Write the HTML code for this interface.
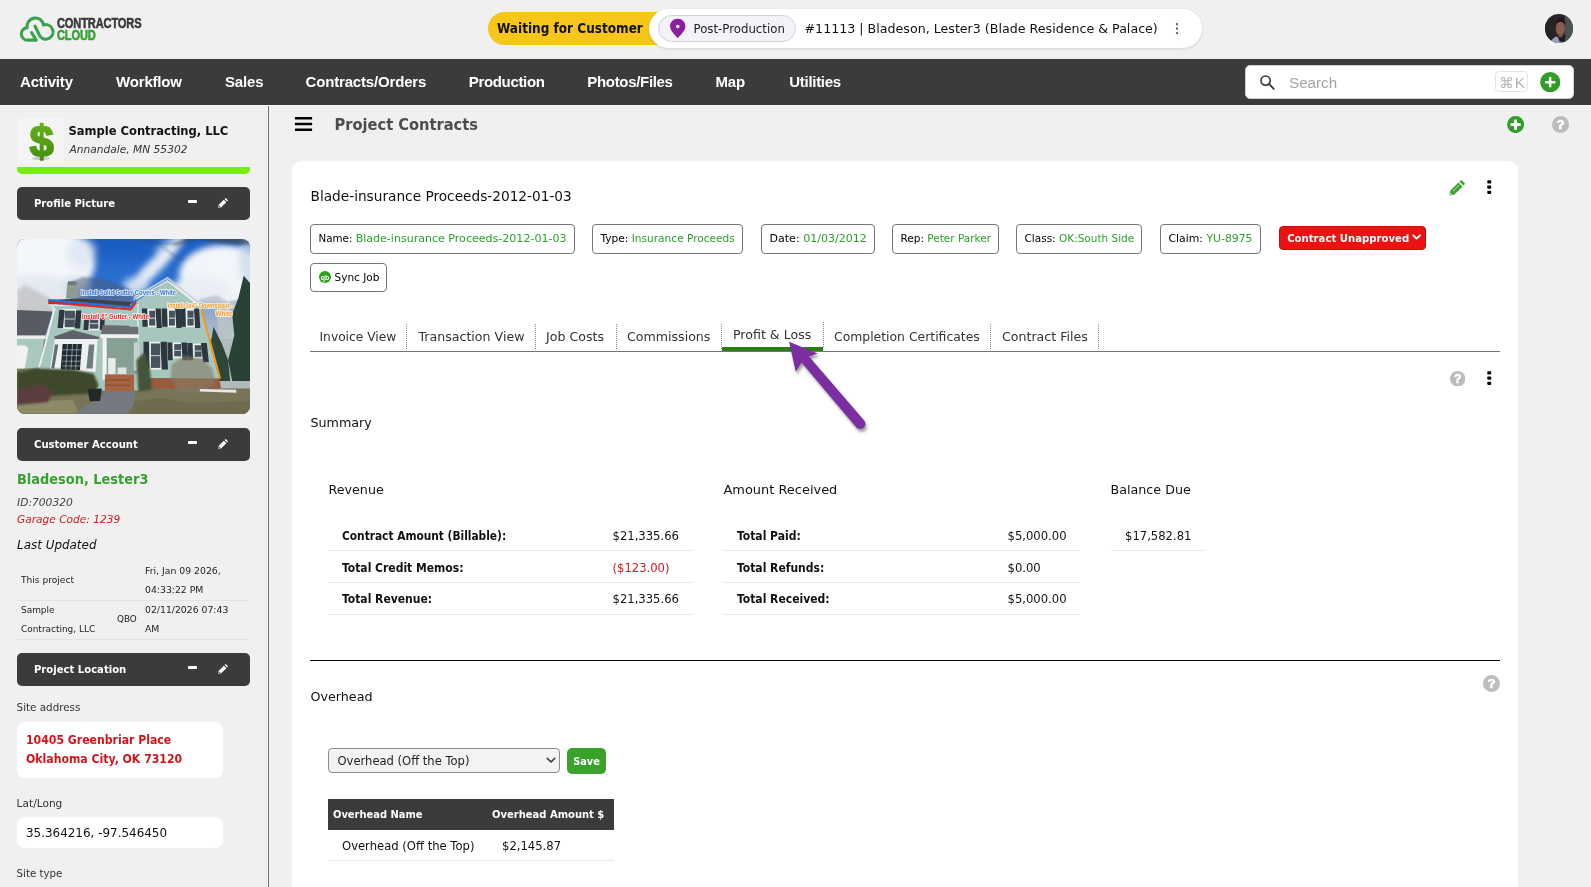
<!DOCTYPE html>
<html lang="en">
<head>
<meta charset="utf-8">
<title>Project Contracts</title>
<style>
*{box-sizing:border-box;margin:0;padding:0}
html,body{width:1591px;height:887px;overflow:hidden;background:#f0f0f0}
body{font-family:"DejaVu Sans","Liberation Sans",sans-serif;font-size:11.6px;color:#000;position:relative}
#wrap{position:absolute;left:0;top:0;width:1591px;height:887px;will-change:transform;overflow:hidden}
.abs{position:absolute}
.t{position:absolute;white-space:nowrap;line-height:16px}
.b{font-family:"DejaVu Sans Condensed","DejaVu Sans",sans-serif;font-weight:bold}
.g{color:#2e9e2b}
/* top header */
#top{position:absolute;left:0;top:0;width:1591px;height:59px;background:#f0f0f0}
#nav{position:absolute;left:0;top:59px;width:1591px;height:45.5px;background:#3c3a3d}
#nav span{position:absolute;top:13.5px;font-family:"Liberation Sans",sans-serif;font-weight:bold;font-size:15px;letter-spacing:-.17px;color:#fff;white-space:nowrap;line-height:18px}
/* sidebar */
#side{position:absolute;left:0;top:104.5px;width:269px;height:783px;background:#f0f0f0;border-right:1px solid #757578}
.shead{position:absolute;left:17px;width:233px;height:33px;background:#3c3a3d;border-radius:5px;color:#fff;font-weight:bold;font-family:"DejaVu Sans Condensed","DejaVu Sans",sans-serif;font-size:11.2px;line-height:33px;padding-left:17px}
.shead i{position:absolute;left:171px;top:13.3px;width:9.2px;height:2.8px;background:#fff;border-radius:.8px}
.shead svg{position:absolute;left:201.2px;top:10.5px}
.wbox{position:absolute;left:17px;width:206px;background:#fff;border-radius:8px}
.lu{position:absolute;font-size:9.3px;line-height:19px;color:#222;white-space:nowrap}
/* main */
#card{position:absolute;left:292px;top:161px;width:1226px;height:740px;background:#fff;border-radius:9px}
.chip{position:absolute;top:224px;height:30px;border:1px solid #767676;border-radius:4px;background:#fff;font-size:10.7px;line-height:27px;padding-left:7.5px;white-space:nowrap}
.tab{position:absolute;top:328.8px;font-size:12.6px;color:#333;white-space:nowrap;line-height:16px}
.dot{position:absolute;top:324px;height:25px;width:0;border-left:1px dotted #8a8a8a}
.row{position:absolute;height:1px;background:#e5e5ec}
.lbl{position:absolute;white-space:nowrap;line-height:16px;font-family:"DejaVu Sans Condensed","DejaVu Sans",sans-serif;font-weight:bold;font-size:12.0px;color:#111}
.val{position:absolute;white-space:nowrap;line-height:16px;font-size:11.6px;color:#111}
.h3{position:absolute;white-space:nowrap;line-height:16px;font-size:12.7px;color:#111}
</style>
</head>
<body>
<div id="wrap">
<!--TOP-->
<div id="top">
<!-- logo -->
<svg class="abs" style="left:14px;top:8px" width="50" height="42" viewBox="0 0 50 42"><path d="M17.6 24.6 L22.2 32.1 H13.96 A6.26 6.26 0 0 1 13.2 19.6 A8 8 0 0 1 29.6 17 A7.25 7.25 0 1 1 26.2 28.6 L21.07 18.2" fill="none" stroke="#38a34c" stroke-width="3.1" stroke-linejoin="round" stroke-linecap="round"/></svg>
<div class="t" id="lg1" style="left:57.2px;top:14.7px;font-family:'Liberation Sans',sans-serif;font-weight:bold;font-size:14.6px;line-height:16px;color:#39383b;-webkit-text-stroke:.55px #39383b;transform:scaleX(.76);transform-origin:0 0;letter-spacing:-.2px">CONTRACTORS</div>
<div class="t" id="lg2" style="left:57.2px;top:27.3px;font-family:'Liberation Sans',sans-serif;font-weight:bold;font-size:14.6px;line-height:16px;color:#33a22f;-webkit-text-stroke:.55px #33a22f;transform:scaleX(.76);transform-origin:0 0;letter-spacing:-.2px">CLOUD</div>
<!-- status pills -->
<div class="abs" style="left:488px;top:12px;width:200px;height:33px;background:#f6c61a;border-radius:16.5px"></div>
<div class="t b" id="wfc" style="left:497px;top:21px;font-size:13.45px;color:#111">Waiting for Customer</div>
<div class="abs" style="left:648.8px;top:9px;width:553.2px;height:39px;background:#fff;border-radius:19.5px;box-shadow:0 1px 3px rgba(0,0,0,.12)"></div>
<div class="abs" style="left:658px;top:15px;width:138px;height:27px;background:#f3f3f7;border:1px solid #d2d2da;border-radius:13.5px"></div>
<svg class="abs" style="left:668.5px;top:18px" width="17.5" height="20.8" viewBox="0 0 16 19"><path d="M8 0.6 C3.9 0.6 1 3.6 1 7.4 C1 11.8 5.2 15.4 8 18.4 C10.8 15.4 15 11.8 15 7.4 C15 3.6 12.1 0.6 8 0.6 Z" fill="#8b1fa0"/><circle cx="8" cy="7.8" r="1.6" fill="#fff"/></svg>
<div class="t" id="pp" style="left:693.5px;top:21px;font-size:11.75px;color:#222">Post-Production</div>
<div class="t" id="ttl" style="left:804.5px;top:20.5px;font-size:12.65px;color:#111">#11113 | Bladeson, Lester3 (Blade Residence &amp; Palace)</div>
<svg class="abs" style="left:1174px;top:22px" width="6" height="14" viewBox="0 0 6 14"><circle cx="3" cy="2.2" r="1.1" fill="#555"/><circle cx="3" cy="6.7" r="1.1" fill="#555"/><circle cx="3" cy="11.2" r="1.1" fill="#555"/></svg>
<!-- avatar -->
<svg class="abs" style="left:1544px;top:13px" width="30" height="31" viewBox="0 0 30 31"><defs><clipPath id="av"><ellipse cx="15" cy="15.45" rx="14" ry="14.45"/></clipPath><filter id="avb" x="-20%" y="-20%" width="140%" height="140%"><feGaussianBlur stdDeviation=".7"/></filter></defs><g clip-path="url(#av)"><rect width="30" height="31" fill="#2b272b"/><g filter="url(#avb)"><rect x="21" y="0" width="9" height="31" fill="#4a5451"/><rect x="0" y="0" width="11" height="31" fill="#262226"/><ellipse cx="16.4" cy="15.6" rx="4.6" ry="7.2" fill="#8a5a54"/><path d="M11.6 11 Q11.8 4.6 16.6 4.4 Q21.4 4.6 21.4 11.4 Q19 8.8 16.4 9 Q13.4 8.8 11.6 11Z" fill="#23191c"/><path d="M6 31 Q8 23.6 14 23.4 L19 29 L21 31Z" fill="#98a2b6"/><path d="M13.4 23 L21.6 22.6 L20.4 28.4 L15.6 28.8Z" fill="#1c1a1e"/><path d="M14.4 21.4 L18.8 21.4 L18.2 24.2 L15.2 24.2Z" fill="#7e4f49"/></g></g></svg>
</div>
<!--NAV-->
<div id="nav">
<span style="left:20px">Activity</span>
<span style="left:116px">Workflow</span>
<span style="left:225px">Sales</span>
<span style="left:305.5px">Contracts/Orders</span>
<span style="left:468.8px;letter-spacing:-.34px">Production</span>
<span style="left:587.3px;letter-spacing:-.32px">Photos/Files</span>
<span style="left:715.5px">Map</span>
<span style="left:789.3px;letter-spacing:-.3px">Utilities</span>
<!-- search -->
<div class="abs" style="left:1245px;top:6px;width:329px;height:34px;background:#fff;border:1px solid #cfcfcf;border-radius:5px"></div>
<svg class="abs" style="left:1259px;top:14.5px" width="17" height="17" viewBox="0 0 17 17"><circle cx="6.6" cy="6.6" r="4.6" fill="none" stroke="#333" stroke-width="1.6"/><path d="M10 10 L14.8 14.8" stroke="#333" stroke-width="1.7" stroke-linecap="round"/></svg>
<div class="t" style="left:1289px;top:14.5px;font-family:'Liberation Sans',sans-serif;font-size:15.2px;line-height:18px;color:#a3a3a3">Search</div>
<div class="abs" style="left:1495px;top:12px;width:32.5px;height:20.5px;border:1px solid #e4e4e4;border-radius:4px;background:#fff"></div>
<div class="t" style="left:1499.3px;top:14.6px;font-family:'DejaVu Sans','Liberation Sans',sans-serif;font-size:13px;line-height:18px;color:#b3b3b3;letter-spacing:.3px"><span style="position:static;font:inherit;font-family:'DejaVu Sans',sans-serif;font-weight:normal;color:#b3b3b3;font-size:14.6px;letter-spacing:0;margin-right:.8px">&#8984;</span><span style="position:static;font-family:'Liberation Sans',sans-serif;font-weight:normal;font-size:15.3px;color:#b3b3b3;letter-spacing:0">K</span></div>
<svg class="abs" style="left:1539.7px;top:12.6px" width="20.4" height="20.4" viewBox="0 0 21 21"><circle cx="10.5" cy="10.5" r="10.4" fill="#2f9e27"/><path d="M10.5 6.2 V14.8 M6.2 10.5 H14.8" stroke="#fff" stroke-width="2.5" stroke-linecap="round"/></svg>
</div>
<!--SIDE-->
<div id="side">

<!-- company -->
<div class="abs" id="dollar" style="left:18px;top:13.5px;width:46px;height:46px;background:#f4f4f4">
<svg width="46" height="46" viewBox="0 0 46 46"><defs><linearGradient id="dg" x1="0" y1="0" x2="0" y2="1"><stop offset="0" stop-color="#6cb51c"/><stop offset="1" stop-color="#3d8a0c"/></linearGradient></defs><ellipse cx="23" cy="40.5" rx="9" ry="1.6" fill="#9a9a9a" opacity=".45"/><text x="23.6" y="38.6" text-anchor="middle" font-family="Liberation Sans, sans-serif" font-weight="bold" font-size="43.5" fill="url(#dg)" stroke="url(#dg)" stroke-width="1.7" stroke-linejoin="round">$</text></svg>
</div>
<div class="t b" style="left:68.5px;top:18.3px;font-size:12.8px;color:#111">Sample Contracting, LLC</div>
<div class="t" style="left:69.5px;top:37.2px;font-size:10.65px;font-style:italic;color:#333">Annandale, MN 55302</div>
<div class="abs" style="left:17px;top:62px;width:233px;height:7.5px;background:#77ee0a;border-radius:0 0 5px 5px"></div>
<!--PHOTO_START--><svg class="abs" id="photo" style="left:17px;top:134.5px;border-radius:8px" width="233" height="174.5" viewBox="0 0 233 174.5">
<defs><linearGradient id="sky" x1="0" y1="0" x2="0" y2="1"><stop offset="0" stop-color="#1a5cc2"/><stop offset=".45" stop-color="#2f74d2"/><stop offset=".75" stop-color="#8fb4e4"/><stop offset="1" stop-color="#c9dcf0"/></linearGradient><filter id="b3" x="-20%" y="-20%" width="140%" height="140%"><feGaussianBlur stdDeviation="3"/></filter><filter id="b1" x="-20%" y="-20%" width="140%" height="140%"><feGaussianBlur stdDeviation="1"/></filter><filter id="b05" x="-20%" y="-20%" width="140%" height="140%"><feGaussianBlur stdDeviation=".5"/></filter><filter id="glow" x="-10%" y="-40%" width="120%" height="180%"><feGaussianBlur stdDeviation=".7"/></filter></defs>
<rect width="233" height="110" fill="url(#sky)"/>
<rect y="100" width="233" height="75" fill="#777458"/>
<g filter="url(#b3)">
<ellipse cx="28" cy="24" rx="50" ry="36" fill="#f3f6fa" opacity="1"/>
<ellipse cx="18" cy="56" rx="44" ry="20" fill="#e4eaf1" opacity="1"/>
<ellipse cx="64" cy="14" rx="14" ry="16" fill="#dbe5f2" opacity="0.75"/>
<ellipse cx="60" cy="48" rx="14" ry="12" fill="#cfdcec" opacity="0.7"/>
<ellipse cx="141" cy="24" rx="38" ry="7" fill="#edf2f9" opacity="0.95" transform="rotate(-47 141 24)"/>
<ellipse cx="127" cy="36" rx="24" ry="5.5" fill="#e3ebf6" opacity="0.9" transform="rotate(-50 127 36)"/>
<ellipse cx="119" cy="46" rx="13" ry="8" fill="#d3e0f1" opacity="0.8"/>
<ellipse cx="150" cy="6" rx="14" ry="5" fill="#c7d8ef" opacity="0.6" transform="rotate(-30 150 6)"/>
<ellipse cx="206" cy="36" rx="44" ry="30" fill="#f2f5f9" opacity="1"/>
<ellipse cx="182" cy="52" rx="30" ry="14" fill="#e9eef5" opacity="1"/>
<ellipse cx="232" cy="20" rx="10" ry="26" fill="#c9d7ea" opacity="0.7"/>
<ellipse cx="100" cy="8" rx="22" ry="10" fill="#1a5cc0" opacity="0.5"/>
</g>
<g filter="url(#b1)"><ellipse cx="212" cy="2" rx="26" ry="3.5" fill="#3c4250" opacity="0.55" transform="rotate(4 212 2)"/><ellipse cx="165" cy="3" rx="10" ry="2" fill="#3c4250" opacity="0.35" transform="rotate(-20 165 3)"/></g>
<g filter="url(#b1)">
<polygon points="0,52 8,46 20,52 34,60 36,76 0,76" fill="#a09c9a" opacity=".4" filter="url(#b1)"/>
<polygon points="52,44 66,38 86,40 104,46 116,52 116,64 52,62" fill="#4a5670" opacity=".5"/>
<polygon points="182,60 200,56 212,64 212,96 200,102 190,98" fill="#aab0b6" opacity=".55"/>
<path d="M119.3 1.2 Q154.7 8.5 181.9 0.2 M181.9 0.2 Q206.9 -1.9 233.0 3.3 M138.0 0.2 Q150.6 14.8 167.3 21.0" stroke="#3a3f4c" stroke-width=".7" fill="none" opacity=".8"/>
</g>
<polygon points="200.6,64.9 233.0,58.6 233.0,151.5 200.6,151.5" fill="#b9c2c8" opacity=".9"/>
<g filter="url(#b05)">
<polygon points="226.7,36.7 233.0,44.0 233.0,142.1 215.2,142.1 211.1,121.2 217.3,96.2 215.2,75.3 221.5,58.6" fill="#2b4336" />
<polygon points="196.5,87.8 204.8,104.5 211.1,121.2 213.2,142.1 190.2,142.1 192.3,112.9" fill="#2f4738" />
</g>
<rect x="-0.1" y="149.4" width="126.6" height="26.1" fill="#777458" />
<rect x="113.0" y="149.4" width="121.0" height="26.1" fill="#777458" />
<polygon points="113.0,162.9 144.3,158.8 175.6,164.0 233.0,161.9 233.0,175.5 113.0,175.5" fill="#6f6b4e" />
<polygon points="-0.1,162.9 55.6,160.8 61.9,174.4 -0.1,174.4" fill="#8d8a68" />
<path d="M89.3 151.8 L117.1 151.8 Q120.5 161 114.2 170 L108.3 175 L55.6 175 L82 159.8 Z" fill="#747a7f"/>
<polygon points="-0.1,71.1 35.8,72.4 28.5,96.6 -0.1,96.6" fill="#585b61" />
<rect x="-0.1" y="96.6" width="28.6" height="3.3" fill="#e9eeec" />
<polygon points="-0.1,99.9 27.4,99.9 22.2,129.5 -0.1,129.5" fill="#a9c8bf" />
<polygon points="-0.1,106.6 8.7,106.6 11.4,109.7 7.6,129.5 -0.1,129.5" fill="#f2f2f0" />
<polygon points="37.2,66.9 118.2,68.0 123.0,68.0 123.0,151.5 24.3,151.5 22.2,131.6" fill="#a7c7be" />
<polygon points="31.6,61.1 61.9,59.6 118.2,63.2 118.2,68.0 31.6,64.9" fill="#3f4249" />
<polygon points="50.4,44.0 59.4,43.0 61.4,58.6 48.9,59.6" fill="#8e9b93" />
<rect x="51.0" y="42.3" width="8.4" height="3.8" fill="#6e7a76" />
<line x1="37.7" y1="69.0" x2="22.2" y2="128.5" stroke="#eef2f0" stroke-width="1.8" />
<rect x="46.2" y="70.1" width="13.2" height="19.8" fill="#f1f3f2" /><rect x="47.7" y="71.7" width="10.2" height="16.5" fill="#46525c" /><rect x="47.7" y="79.6" width="10.2" height="0.8" fill="#f1f3f2" />
<polygon points="42.2,71.1 47.7,71.1 46.0,88.9 40.6,88.9" fill="#2e3640" />
<polygon points="58.9,71.5 64.4,71.5 63.1,89.5 57.7,89.5" fill="#2e3640" />
<rect x="71.3" y="78.0" width="11.4" height="13.4" fill="#f1f3f2" /><rect x="72.7" y="79.7" width="8.6" height="10.0" fill="#46525c" /><rect x="72.7" y="84.3" width="8.6" height="0.8" fill="#f1f3f2" />
<polygon points="67.3,79.5 72.1,79.5 71.3,90.9 66.5,90.9" fill="#2e3640" />
<polygon points="83.1,79.5 87.7,79.5 87.3,90.9 82.7,90.9" fill="#2e3640" />
<polygon points="85.9,86.1 118.2,87.0 120.7,95.7 83.8,95.3" fill="#6b6d72" />
<rect x="83.4" y="95.3" width="38.6" height="3.8" fill="#eef1f0" />
<rect x="89.4" y="99.1" width="32.6" height="35.7" fill="#86a094" />
<rect x="116.1" y="102.4" width="4.6" height="29.2" fill="#6b8278" />
<rect x="85.6" y="99.1" width="4.0" height="41.9" fill="#f3f5f4" />
<rect x="91.1" y="119.1" width="7.5" height="16.3" fill="#e8eceb" />
<rect x="100.5" y="128.5" width="8.9" height="6.9" fill="#dfe4e2" />
<polygon points="37.2,97.4 55.6,90.9 83.1,98.2 80.6,100.3 37.9,99.9" fill="#5f6268" />
<polygon points="37.9,99.9 80.6,99.9 78.6,132.7 32.6,131.6" fill="#eef1f0" />
<polygon points="45.6,104.9 65.0,104.9 62.9,131.2 43.7,130.6" fill="#1f2a33" />
<polygon points="71.9,105.6 77.3,105.6 75.6,129.5 69.4,129.5" fill="#6d7d80" />
<polygon points="37.9,105.6 41.4,105.6 37.2,129.5 34.3,129.5" fill="#5f6f73" />
<line x1="50.4" y1="104.9" x2="48.7" y2="131.0" stroke="#dfe6e6" stroke-width="0.5" />
<line x1="55.6" y1="104.9" x2="53.9" y2="131.0" stroke="#dfe6e6" stroke-width="0.5" />
<line x1="60.2" y1="104.9" x2="58.5" y2="131.0" stroke="#dfe6e6" stroke-width="0.5" />
<line x1="45.2" y1="110.8" x2="64.6" y2="110.8" stroke="#dfe6e6" stroke-width="0.5" />
<line x1="45.2" y1="116.6" x2="64.6" y2="116.6" stroke="#dfe6e6" stroke-width="0.5" />
<line x1="45.2" y1="122.2" x2="64.6" y2="122.2" stroke="#dfe6e6" stroke-width="0.5" />
<line x1="45.2" y1="127.0" x2="64.6" y2="127.0" stroke="#dfe6e6" stroke-width="0.5" />
<rect x="87.9" y="135.4" width="28.6" height="16.7" fill="#a86442" />
<line x1="87.9" y1="141.0" x2="116.5" y2="141.0" stroke="#7c4429" stroke-width="0.8" />
<line x1="87.9" y1="146.2" x2="116.5" y2="146.2" stroke="#7c4429" stroke-width="0.8" />
<polygon points="113.0,64.9 119.3,62.4 150.6,42.3 183.5,68.0 202.3,140.0 113.0,140.0" fill="#a7c7be" />
<polyline points="116.8,61.1 150.6,41.9 183.5,67.6" fill="none" stroke="#e9eeec" stroke-width="1.6"/>
<polygon points="117.2,59.6 150.6,40.2 183.9,66.5 185.0,64.9 150.6,37.7 116.1,58.2" fill="#c9d2d4" opacity=".9"/>
<line x1="120.9" y1="64.9" x2="120.9" y2="140.0" stroke="#e9eeec" stroke-width="1.2" />
<rect x="113.0" y="87.8" width="8.3" height="8.4" fill="#6b6d72" />
<rect x="113.0" y="95.3" width="8.8" height="3.8" fill="#eef1f0" />
<rect x="113.0" y="99.1" width="7.5" height="35.7" fill="#86a094" />
<rect x="116.8" y="103.5" width="3.7" height="28.1" fill="#c8d4d0" />
<polygon points="132.8,138.9 202.3,139.6 204.0,149.4 132.8,149.4" fill="#9a5b3c" />
<rect x="113.0" y="135.4" width="4.2" height="16.7" fill="#a86442" />
<rect x="130.7" y="70.1" width="9.0" height="18.1" fill="#f1f3f2" /><rect x="132.2" y="71.7" width="6.0" height="14.9" fill="#46525c" /><rect x="132.2" y="78.7" width="6.0" height="0.9" fill="#f1f3f2" />
<polygon points="124.9,69.5 130.1,69.5 130.7,87.8 125.5,87.8" fill="#2e3640" />
<polygon points="138.5,69.5 143.7,69.5 144.9,88.9 139.7,88.9" fill="#2e3640" />
<rect x="150.6" y="70.1" width="8.7" height="18.1" fill="#f1f3f2" /><rect x="152.0" y="71.7" width="5.9" height="14.9" fill="#46525c" /><rect x="152.0" y="78.7" width="5.9" height="0.9" fill="#f1f3f2" />
<polygon points="144.7,69.5 149.9,69.5 150.6,87.8 145.3,87.8" fill="#2e3640" />
<polygon points="158.1,69.5 163.3,69.5 164.5,88.9 159.3,88.9" fill="#2e3640" />
<rect x="168.9" y="70.1" width="9.2" height="18.1" fill="#f1f3f2" /><rect x="170.4" y="71.7" width="6.2" height="14.9" fill="#46525c" /><rect x="170.4" y="78.7" width="6.2" height="0.9" fill="#f1f3f2" />
<polygon points="163.1,69.5 168.3,69.5 168.9,87.8 163.7,87.8" fill="#2e3640" />
<polygon points="176.9,69.5 182.1,69.5 183.3,88.9 178.1,88.9" fill="#2e3640" />
<rect x="132.4" y="102.8" width="12.3" height="27.8" fill="#f1f3f2" /><rect x="133.9" y="104.5" width="9.4" height="24.4" fill="#46525c" /><rect x="133.9" y="116.3" width="9.4" height="0.8" fill="#f1f3f2" />
<polygon points="126.4,102.8 132.0,102.8 132.4,129.5 126.8,129.5" fill="#2e3640" />
<polygon points="143.5,102.8 149.7,102.8 151.0,130.6 144.7,130.6" fill="#2e3640" />
<rect x="155.8" y="103.5" width="9.8" height="15.6" fill="#f1f3f2" /><rect x="157.2" y="105.1" width="6.9" height="12.3" fill="#46525c" /><rect x="157.2" y="110.9" width="6.9" height="0.8" fill="#f1f3f2" />
<polygon points="150.4,103.5 155.2,103.5 155.8,121.2 151.0,121.2" fill="#2e3640" />
<polygon points="164.3,103.5 170.2,103.5 171.4,121.2 165.6,121.2" fill="#2e3640" />
<rect x="176.2" y="104.5" width="9.8" height="15.0" fill="#f1f3f2" /><rect x="177.7" y="106.2" width="6.9" height="11.7" fill="#46525c" /><rect x="177.7" y="111.6" width="6.9" height="0.8" fill="#f1f3f2" />
<polygon points="170.6,104.1 175.4,104.1 176.2,121.2 171.4,121.2" fill="#2e3640" />
<polygon points="183.9,104.1 189.8,104.1 191.9,123.3 186.0,123.3" fill="#2e3640" />
<g filter="url(#b1)">
<polygon points="-0.1,133.7 18.0,129.5 55.6,130.6 76.5,134.8 81.7,146.2 76.5,154.6 34.7,156.7 -0.1,162.9" fill="#3d4a2c" />
<polygon points="-0.1,150.4 24.3,145.2 36.8,152.5 30.6,162.9 -0.1,166.1" fill="#5c3d3c" />
<polygon points="154.7,125.4 167.3,117.0 183.9,119.1 195.4,129.5 198.6,146.2 181.9,154.6 161.0,152.5 153.7,140.0" fill="#857a66" opacity=".62"/>
<polygon points="119.3,121.2 127.6,112.9 132.8,129.5 134.9,150.4 121.3,152.5" fill="#44523a" />
</g>
<polygon points="70.6,150.0 84.8,149.4 83.1,161.9 72.7,162.3" fill="#25272b" />
<polygon points="182.9,150.0 219.0,150.8 219.4,153.8 182.9,152.5" fill="#e6e9ea" />
<polyline points="31.2,61.1 113.0,68.4 119.2,60.7" fill="none" stroke="#2f6fd6" stroke-width="2.2"/>
<polyline points="31.2,63.2 113.6,70.5 119.2,63.2" fill="none" stroke="#e8281f" stroke-width="2"/>
<line x1="184.4" y1="71.1" x2="203.1" y2="139.6" stroke="#f3981c" stroke-width="2" />
<text x="64" y="55.6" textLength="95" lengthAdjust="spacingAndGlyphs" font-family="Liberation Sans, sans-serif" font-weight="bold" font-size="6.4" fill="none" stroke="#fff" stroke-width="1.6" stroke-linejoin="round" opacity=".9" filter="url(#glow)">Install Solid Gutter Covers - White</text><text x="64" y="55.6" textLength="95" lengthAdjust="spacingAndGlyphs" font-family="Liberation Sans, sans-serif" font-weight="bold" font-size="6.4" fill="#2f6fd6">Install Solid Gutter Covers - White</text>
<text x="65" y="79.8" textLength="67" lengthAdjust="spacingAndGlyphs" font-family="Liberation Sans, sans-serif" font-weight="bold" font-size="6.4" fill="none" stroke="#fff" stroke-width="1.6" stroke-linejoin="round" opacity=".9" filter="url(#glow)">Install 6&quot; Gutter - White</text><text x="65" y="79.8" textLength="67" lengthAdjust="spacingAndGlyphs" font-family="Liberation Sans, sans-serif" font-weight="bold" font-size="6.4" fill="#e8281f">Install 6&quot; Gutter - White</text>
<text x="150.6" y="68.8" textLength="65.5" lengthAdjust="spacingAndGlyphs" font-family="Liberation Sans, sans-serif" font-weight="bold" font-size="6.4" fill="none" stroke="#fff" stroke-width="1.6" stroke-linejoin="round" opacity=".9" filter="url(#glow)">Install 3x4&quot; Downspout -</text><text x="150.6" y="68.8" textLength="65.5" lengthAdjust="spacingAndGlyphs" font-family="Liberation Sans, sans-serif" font-weight="bold" font-size="6.4" fill="#f3981c">Install 3x4&quot; Downspout -</text>
<text x="198.6" y="77.3" textLength="16.8" lengthAdjust="spacingAndGlyphs" font-family="Liberation Sans, sans-serif" font-weight="bold" font-size="6.4" fill="none" stroke="#fff" stroke-width="1.6" stroke-linejoin="round" opacity=".9" filter="url(#glow)">White</text><text x="198.6" y="77.3" textLength="16.8" lengthAdjust="spacingAndGlyphs" font-family="Liberation Sans, sans-serif" font-weight="bold" font-size="6.4" fill="#f3981c">White</text>
</svg><!--PHOTO_END-->
<!-- customer -->
<div class="t b g" style="left:17px;top:366.5px;font-size:14.4px;color:#35a12f">Bladeson, Lester3</div>
<div class="t" style="left:17px;top:390.3px;font-size:10.7px;font-style:italic;color:#444">ID:700320</div>
<div class="t" style="left:17px;top:406.5px;font-size:10.6px;font-style:italic;color:#d0181d">Garage Code: 1239</div>
<div class="t" style="left:17px;top:432px;font-size:11.95px;font-style:italic;color:#111">Last Updated</div>
<div class="lu" style="left:21px;top:466px;font-size:9.1px">This project</div>
<div class="lu" style="left:145px;top:456.5px">Fri, Jan 09 2026,<br>04:33:22 PM</div>
<div class="abs" style="left:17px;top:495.5px;width:233px;height:1px;background:#e2e2ea"></div>
<div class="lu" style="left:21px;top:496.3px;font-size:8.95px">Sample<br>Contracting, LLC</div>
<div class="lu" style="left:117px;top:505.3px;font-size:8.8px">QBO</div>
<div class="lu" style="left:145px;top:495.5px">02/11/2026 07:43<br>AM</div>
<div class="abs" style="left:17px;top:534.5px;width:233px;height:1px;background:#e2e2ea"></div>
<!-- location -->
<div class="t" style="left:16.6px;top:594.5px;font-size:10.35px;color:#333">Site address</div>
<div class="wbox" style="top:617.5px;height:56.3px"></div>
<div class="t b" style="left:26px;top:626.5px;font-size:12.15px;line-height:19px;color:#d3151b">10405 Greenbriar Place<br>Oklahoma City, OK 73120</div>
<div class="t" style="left:16.6px;top:690.5px;font-size:10.6px;color:#333">Lat/Long</div>
<div class="wbox" style="top:712.5px;height:30.7px"></div>
<div class="t" style="left:26px;top:720px;font-size:11.95px;color:#111">35.364216, -97.546450</div>
<div class="t" style="left:16.6px;top:760.5px;font-size:10.25px;color:#333">Site type</div>
<div class="shead" style="top:82.5px">Profile Picture<i></i><svg width="10" height="10" viewBox="0 0 16 16"><path d="M1.2 10.8 L9.3 2.7 L13.3 6.7 L5.2 14.8 L0.4 15.6 Z" fill="#fff"/><path d="M10.5 1.5 L11.5 0.5 Q12.2 -0.1 12.9 0.5 L15.5 3.1 Q16.1 3.8 15.5 4.5 L14.5 5.5 Z" fill="#fff"/><circle cx="2.6" cy="13.4" r="1" fill="#3c3a3d"/></svg></div>
<div class="shead" style="top:323.5px">Customer Account<i></i><svg width="10" height="10" viewBox="0 0 16 16"><path d="M1.2 10.8 L9.3 2.7 L13.3 6.7 L5.2 14.8 L0.4 15.6 Z" fill="#fff"/><path d="M10.5 1.5 L11.5 0.5 Q12.2 -0.1 12.9 0.5 L15.5 3.1 Q16.1 3.8 15.5 4.5 L14.5 5.5 Z" fill="#fff"/><circle cx="2.6" cy="13.4" r="1" fill="#3c3a3d"/></svg></div>
<div class="shead" style="top:548.5px">Project Location<i></i><svg width="10" height="10" viewBox="0 0 16 16"><path d="M1.2 10.8 L9.3 2.7 L13.3 6.7 L5.2 14.8 L0.4 15.6 Z" fill="#fff"/><path d="M10.5 1.5 L11.5 0.5 Q12.2 -0.1 12.9 0.5 L15.5 3.1 Q16.1 3.8 15.5 4.5 L14.5 5.5 Z" fill="#fff"/><circle cx="2.6" cy="13.4" r="1" fill="#3c3a3d"/></svg></div>
</div>
<div class="abs" style="left:0;top:104.6px;width:1591px;height:1.2px;background:#f9f9f9"></div>
<!--MAIN-->

<!-- page title row -->
<svg class="abs" style="left:294px;top:116px" width="19" height="16" viewBox="0 0 19 16"><rect x="0.9" y="1.1" width="17.2" height="2.5" rx=".5" fill="#050505"/><rect x="0.9" y="6.8" width="17.2" height="2.5" rx=".5" fill="#050505"/><rect x="0.9" y="12.5" width="17.2" height="2.5" rx=".5" fill="#050505"/></svg>
<div class="t b" id="pc" style="left:334.5px;top:114.7px;font-size:16.3px;line-height:20px;color:#4c4c4e">Project Contracts</div>
<svg class="abs" style="left:1507px;top:115.9px" width="17.2" height="17.2" viewBox="0 0 17 17"><circle cx="8.5" cy="8.5" r="8.4" fill="#2f9e27"/><path d="M8.5 4.7 V12.3 M4.7 8.5 H12.3" stroke="#fff" stroke-width="3" stroke-linecap="round"/></svg>
<svg class="abs" style="left:1552.1px;top:115.6px" width="17" height="17" viewBox="0 0 16 16"><circle cx="8" cy="8" r="8" fill="#bcbcbc"/><text x="8" y="12.6" text-anchor="middle" font-family="Liberation Sans, sans-serif" font-weight="bold" font-size="12.6" fill="#fff" stroke="#fff" stroke-width=".6">?</text></svg>
<div id="card"></div>
<div class="t" id="ct" style="left:310.5px;top:188px;font-size:13.7px;color:#111">Blade-insurance Proceeds-2012-01-03</div>
<svg class="abs" style="left:1449px;top:179.7px" width="16" height="16" viewBox="0 0 16 16"><path d="M1.2 10.8 L9.5 2.5 L13.5 6.5 L5.2 14.8 L0.4 15.6 Z" fill="#3aa22e"/><path d="M10.4 1.6 L11.5 0.5 Q12.2 -0.1 12.9 0.5 L15.5 3.1 Q16.1 3.8 15.5 4.5 L14.4 5.6 Z" fill="#3aa22e"/><path d="M3.9 11.3 L10.4 4.8" stroke="#e9f6e6" stroke-width=".8"/><path d="M1.5 12.8 L3.2 14.5 L1.3 14.8 Z" fill="#fff"/></svg>
<svg class="abs" style="left:1485.5px;top:179px" width="6" height="16" viewBox="0 0 6 16"><rect x="1.3" y="1.3" width="3.9" height="3.2" rx=".8" fill="#050505"/><rect x="1.3" y="6.5" width="3.9" height="3.2" rx=".8" fill="#050505"/><rect x="1.3" y="11.7" width="3.9" height="3.2" rx=".8" fill="#050505"/></svg>
<!-- chips -->
<div class="chip" style="left:310px;width:265px;font-size:10.3px">Name: <span class="g" style="font-size:11.05px">Blade-insurance Proceeds-2012-01-03</span></div>
<div class="chip" style="left:592px;width:151px;font-size:10.58px">Type: <span class="g">Insurance Proceeds</span></div>
<div class="chip" style="left:761px;width:114px;font-size:11.05px">Date: <span class="g">01/03/2012</span></div>
<div class="chip" style="left:892px;width:107px;font-size:10.5px">Rep: <span class="g">Peter Parker</span></div>
<div class="chip" style="left:1016px;width:126px;font-size:10.5px">Class: <span class="g">OK:South Side</span></div>
<div class="chip" style="left:1160px;width:101px;font-size:10.85px">Claim: <span class="g">YU-8975</span></div>
<div class="abs b" style="left:1279px;top:225.5px;width:147px;height:24px;background:#ee1111;border:1px solid #c40d0d;border-radius:4px;color:#fff;font-size:11.25px;line-height:23px;padding-left:7.2px;white-space:nowrap">Contract Unapproved<svg style="position:absolute;left:132px;top:7.8px" width="9.2" height="6.6" viewBox="0 0 10 7"><path d="M1.2 1.3 L5 5 L8.8 1.3" fill="none" stroke="#fff" stroke-width="2" stroke-linecap="round" stroke-linejoin="round"/></svg></div>
<div class="chip" style="left:310px;top:263px;width:77px;height:28.7px;padding-left:23.5px;font-size:10.5px;line-height:26px">Sync Job<svg style="position:absolute;left:8px;top:7.3px" width="12" height="12" viewBox="0 0 12 12"><circle cx="6" cy="6" r="6" fill="#2ca01c"/><text x="6" y="8.6" text-anchor="middle" font-family="Liberation Sans, sans-serif" font-weight="bold" font-size="7" fill="#fff">qb</text></svg></div>
<!-- tabs -->
<div class="tab" style="left:319.5px;font-size:12.25px">Invoice View</div>
<div class="tab" style="left:418.5px">Transaction View</div>
<div class="tab" style="left:546px">Job Costs</div>
<div class="tab" style="left:627px">Commissions</div>
<div class="tab" style="left:733px;top:326.8px">Profit &amp; Loss</div>
<div class="tab" style="left:834px;font-size:12.4px">Completion Certificates</div>
<div class="tab" style="left:1002px">Contract Files</div>
<div class="dot" style="left:406px"></div><div class="dot" style="left:535px"></div><div class="dot" style="left:616px"></div><div class="dot" style="left:721px;top:323.5px"></div><div class="dot" style="left:822.5px;top:322px"></div><div class="dot" style="left:989.8px"></div><div class="dot" style="left:1097.8px"></div>
<div class="abs" style="left:310px;top:351px;width:1190px;height:1px;background:#757575"></div>
<div class="abs" style="left:722px;top:347px;width:100.5px;height:4px;background:#2a7d12"></div>
<svg class="abs" style="left:1449.5px;top:370.9px" width="15.4" height="15.4" viewBox="0 0 16 16"><circle cx="8" cy="8" r="8" fill="#bcbcbc"/><text x="8" y="12.6" text-anchor="middle" font-family="Liberation Sans, sans-serif" font-weight="bold" font-size="12.6" fill="#fff" stroke="#fff" stroke-width=".6">?</text></svg>
<svg class="abs" style="left:1485.5px;top:370px" width="6" height="16" viewBox="0 0 6 16"><rect x="1.3" y="1.3" width="3.9" height="3.2" rx=".8" fill="#050505"/><rect x="1.3" y="6.5" width="3.9" height="3.2" rx=".8" fill="#050505"/><rect x="1.3" y="11.7" width="3.9" height="3.2" rx=".8" fill="#050505"/></svg>
<!-- summary -->
<div class="h3" style="left:310.5px;top:415.4px">Summary</div>
<div class="h3" style="left:328.5px;top:481.5px">Revenue</div>
<div class="h3" style="left:723.5px;top:481.5px;font-size:12.95px">Amount Received</div>
<div class="h3" style="left:1110.5px;top:481.5px">Balance Due</div>
<div class="lbl" style="left:342px;top:528px;font-size:11.8px">Contract Amount (Billable):</div><div class="val" style="left:612.5px;top:528px">$21,335.66</div>
<div class="lbl" style="left:342px;top:559.5px">Total Credit Memos:</div><div class="val" style="left:612.5px;top:559.5px;color:#d0181d">($123.00)</div>
<div class="lbl" style="left:342px;top:590.5px">Total Revenue:</div><div class="val" style="left:612.5px;top:590.5px">$21,335.66</div>
<div class="row" style="left:328px;width:365px;top:550px"></div><div class="row" style="left:328px;width:365px;top:582px"></div><div class="row" style="left:328px;width:365px;top:614px"></div>
<div class="lbl" style="left:737px;top:528px">Total Paid:</div><div class="val" style="left:1007.5px;top:528px">$5,000.00</div>
<div class="lbl" style="left:737px;top:559.5px">Total Refunds:</div><div class="val" style="left:1007.5px;top:559.5px">$0.00</div>
<div class="lbl" style="left:737px;top:590.5px">Total Received:</div><div class="val" style="left:1007.5px;top:590.5px">$5,000.00</div>
<div class="row" style="left:723px;width:357px;top:550px"></div><div class="row" style="left:723px;width:357px;top:582px"></div><div class="row" style="left:723px;width:357px;top:614px"></div>
<div class="val" style="left:1125px;top:528px">$17,582.81</div>
<div class="row" style="left:1111px;width:94px;top:550px"></div>
<div class="abs" style="left:310px;top:660px;width:1190px;height:1px;background:#0a0a0a"></div>
<!-- overhead -->
<svg class="abs" style="left:1482.7px;top:675.3px" width="17" height="17" viewBox="0 0 16 16"><circle cx="8" cy="8" r="8" fill="#bcbcbc"/><text x="8" y="12.6" text-anchor="middle" font-family="Liberation Sans, sans-serif" font-weight="bold" font-size="12.6" fill="#fff" stroke="#fff" stroke-width=".6">?</text></svg>
<div class="h3" style="left:310.5px;top:688.8px">Overhead</div>
<div class="abs" style="left:328px;top:748px;width:232px;height:24.5px;background:#f3f3f3;border:1px solid #8c8c8c;border-radius:4px;font-size:11.55px;line-height:24.5px;padding-left:8.5px;color:#222;white-space:nowrap">Overhead (Off the Top)<svg style="position:absolute;left:217.3px;top:8.3px" width="10" height="7" viewBox="0 0 10 7"><path d="M1.2 1.3 L5 5 L8.8 1.3" fill="none" stroke="#333" stroke-width="1.6" stroke-linecap="round" stroke-linejoin="round"/></svg></div>
<div class="abs b" style="left:567px;top:748px;width:39px;height:25.5px;background:#38a22b;border-radius:5px;color:#fff;font-size:10.9px;line-height:27px;text-align:center">Save</div>
<div class="abs" style="left:328px;top:799px;width:286px;height:30.5px;background:#3c3a3d"></div>
<div class="lbl" style="left:333px;top:806.8px;color:#fff;font-size:11.0px">Overhead Name</div>
<div class="lbl" style="left:492px;top:806.8px;color:#fff;font-size:11.1px">Overhead Amount $</div>
<div class="val" style="left:342px;top:838px">Overhead (Off the Top)</div>
<div class="val" style="left:502px;top:838px">$2,145.87</div>
<div class="row" style="left:328px;width:286px;top:860px"></div>
<!-- arrow -->
<svg class="abs" style="left:769.2px;top:329.2px" width="120" height="120" viewBox="0 0 120 120"><defs><filter id="sh" x="-20%" y="-20%" width="150%" height="150%"><feGaussianBlur stdDeviation="1.5"/></filter></defs><path d="M20.1 12.7 L48.7 24.5 L40 27.5 L95.2 91.4 A5.25 5.25 0 0 1 87.2 98.2 L32.6 33.6 L26.7 42.8 Z" fill="#000" opacity=".38" filter="url(#sh)" transform="translate(1.5,3)"/><path d="M20.1 12.7 L48.7 24.5 L40 27.5 L95.2 91.4 A5.25 5.25 0 0 1 87.2 98.2 L32.6 33.6 L26.7 42.8 Z" fill="#7a2ea2"/></svg>

</div>
</body>
</html>
